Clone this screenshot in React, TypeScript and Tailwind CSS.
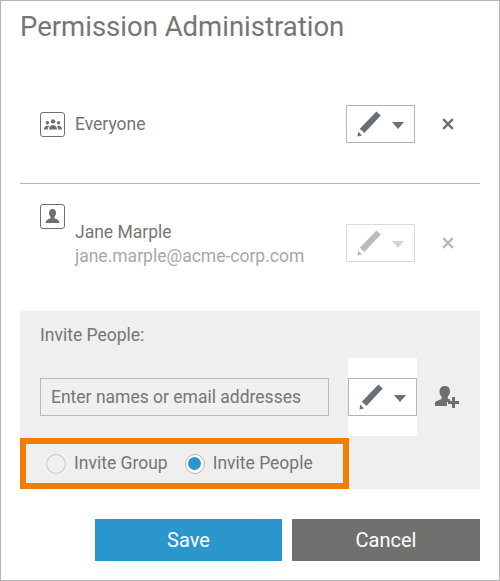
const Pencil = ({ className }: { className: string }) => (
  <svg viewBox="0 0 24 26" className={className} fill="currentColor">
    <path d="M19.4 0.5 23.8 4.400 7.400 22 2.800 17.800Z" />
    <path d="M0.5 25.5 1.2 20.4 5 24.400Z" />
  </svg>
);

const AccessButton = ({ disabled = false }: { disabled?: boolean }) => (
  <div
    className={`flex h-[38px] w-[69px] items-center border bg-white pl-[10px] ${
      disabled ? "border-[#dcdcdc] text-[#b9bdc0]" : "border-[#b5b5b5] text-[#667079]"
    }`}
  >
    <Pencil className="h-[26px] w-[24px]" />
    <span
      className={`ml-[11px] mt-[2px] h-0 w-0 border-x-[6px] border-t-[7px] border-x-transparent ${
        disabled ? "border-t-[#d6d6d6]" : "border-t-[#6f706e]"
      }`}
    />
  </div>
);

const Close = ({ disabled = false }: { disabled?: boolean }) => (
  <svg viewBox="0 0 12 12" className={`h-3 w-3 ${disabled ? "text-[#b9bdc0]" : "text-[#667079]"}`}>
    <path d="M1.2 1.2 10.8 10.8M10.8 1.2 1.2 10.8" stroke="currentColor" strokeWidth="2.4" />
  </svg>
);

const IconBox = ({ children }: { children: React.ReactNode }) => (
  <div className="flex h-[25px] w-[25px] shrink-0 items-center justify-center rounded-[3px] border border-[#6f706e] text-[#6f706e]">
    {children}
  </div>
);

const Radio = ({ label, checked = false }: { label: string; checked?: boolean }) => (
  <label className="flex items-center gap-2">
    <span
      className={`flex h-[20px] w-[20px] items-center justify-center rounded-full border ${
        checked ? "border-[#b5b5b5] bg-white" : "border-[#c4c4c4] bg-[#f0f0f0]"
      }`}
    >
      {checked && <span className="h-[13px] w-[13px] rounded-full bg-[#2b96cc]" />}
    </span>
    <span>{label}</span>
  </label>
);

export default function App() {
  return (
    <div className="flex h-[581px] w-[500px] flex-col border border-[#b5b5b5] bg-white px-[19px] font-['Roboto',sans-serif] text-[17.5px] text-[#757674]">
      <h1 className="mt-[9px] text-[27.5px] leading-[34px]">Permission Administration</h1>

      <div className="mt-[61px] flex h-[38px] items-center pl-5 pr-[26px]">
        <IconBox>
          <svg viewBox="0 0 20 12" className="h-[11px] w-[18px]" fill="currentColor">
            <circle cx="10" cy="2.600" r="2.400" />
            <path d="M5.500 11.500C5.500 8.500 7.500 7.500 8.800 6.800h2.400c1.300.7 3.300 1.700 3.300 4.700Z" />
            <circle cx="3.800" cy="4" r="1.900" />
            <path d="M0 11.500C0 9 1.500 8.200 2.800 7.500h2L5.600 8C4.600 9 4.200 10.200 4.200 11.500Z" />
            <circle cx="16.200" cy="4" r="1.900" />
            <path d="M20 11.500C20 9 18.500 8.200 17.200 7.500h-2L14.400 8C15.400 9 15.800 10.200 15.800 11.500Z" />
          </svg>
        </IconBox>
        <span className="ml-[10px]">Everyone</span>
        <div className="ml-auto flex items-center gap-[27px]">
          <AccessButton />
          <Close />
        </div>
      </div>

      <div className="mt-10 border-t border-[#b5b5b5]" />

      <div className="mt-5 flex h-[58px] pl-5 pr-[26px]">
        <IconBox>
          <svg viewBox="0 0 16 16" className="h-[17px] w-[17px]" fill="currentColor">
            <path d="M8 1c2.200 0 3.300 1.600 3.300 3.700 0 1.600-.7 3-1.600 3.800v1.200c1.800.7 4.800 1.400 4.800 4.300h-13c0-2.900 3-3.600 4.800-4.300V8.500C5.400 7.700 4.700 6.300 4.700 4.700 4.700 2.600 5.800 1 8 1Z" />
          </svg>
        </IconBox>
        <div className="ml-[10px] mt-[16px] leading-[24px]">
          <div>Jane Marple</div>
          <div className="text-[#a8a8a8]">jane.marple@acme-corp.com</div>
        </div>
        <div className="ml-auto mt-5 flex items-center gap-[27px] self-start">
          <AccessButton disabled />
          <Close disabled />
        </div>
      </div>

      <section className="mt-[49px] h-[178px] bg-[#efefef]">
        <div className="px-5 pt-[14px] leading-5">Invite People:</div>
        <div className="mt-[13px] flex h-[78px] items-center pl-5">
          <div className="flex h-[38px] w-[289px] items-center border border-[#b8b8b8] bg-[#f0f0f0] pl-[10px]">
            Enter names or email addresses
          </div>
          <div className="ml-[19px] flex h-[78px] items-center bg-white">
            <AccessButton />
          </div>
          <svg viewBox="0 0 26 24" className="ml-[17px] h-[24px] w-[26px] text-[#6f706e]" fill="currentColor">
            <path d="M11 1c3.500 0 5 2.300 5 5.300 0 2.300-1 4.300-2.200 5.300v2c.8.300 1.500.6 2.200.9v2.500h-3V21H1v-3c0-2 4.500-3 6.500-4v-2.400C6.300 10.600 5.500 8.600 5.500 6.300 5.500 3.300 7.500 1 11 1Z" />
            <path d="M18 12h3v4h4v3h-4v4h-3v-4h-4v-3h4Z" />
          </svg>
        </div>
        <div className="mt-[2px] flex h-[51px] w-[329px] items-center gap-[17px] border-[6px] border-[#f27d00] pl-5">
          <Radio label="Invite Group" />
          <Radio label="Invite People" checked />
        </div>
      </section>

      <div className="mt-[30px] flex justify-end gap-[10px] text-[20px] text-white">
        <button className="h-[42px] w-[187px] bg-[#2b96cc]">Save</button>
        <button className="h-[42px] w-[188px] bg-[#70716e]">Cancel</button>
      </div>
    </div>
  );
}
